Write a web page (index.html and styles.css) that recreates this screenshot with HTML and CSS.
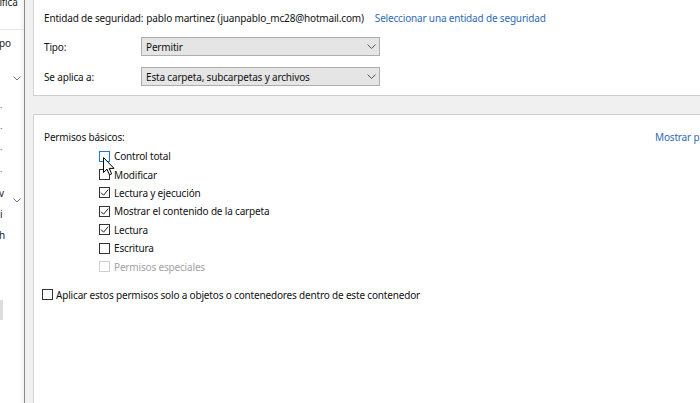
FILE: index.html
```html
<!DOCTYPE html>
<html lang="es">
<head>
<meta charset="utf-8">
<title>Permisos</title>
<link rel="stylesheet" href="styles.css">
</head>
<body>
<div class="screen">
  <aside class="backwin">
    <div class="bw-row bw-r1"><span class="frag">tifica</span></div>
    <div class="bw-sep"></div>
    <div class="bw-row bw-r2"><span class="frag">po</span></div>
    <div class="bw-row bw-r3"><svg class="chev" viewBox="0 0 8 5" width="8" height="5"><path d="M0.5 0.5 L4 4 L7.5 0.5" fill="none" stroke="#777" stroke-width="1"/></svg></div>
    <div class="bw-row bw-r4"><span class="frag sm">·</span></div>
    <div class="bw-row bw-r5"><span class="frag sm">·</span></div>
    <div class="bw-row bw-r6"><span class="frag sm">·</span></div>
    <div class="bw-row bw-r7"><span class="frag sm">·</span></div>
    <div class="bw-row bw-r8"><span class="frag">v</span><svg class="chev" viewBox="0 0 8 5" width="8" height="5"><path d="M0.5 0.5 L4 4 L7.5 0.5" fill="none" stroke="#777" stroke-width="1"/></svg></div>
    <div class="bw-row bw-r9"><span class="frag">i</span></div>
    <div class="bw-row bw-r10"><span class="frag">h</span></div>
    <div class="bw-block"></div>
  </aside>
  <div class="gutter"></div>
  <main class="dialog">
    <section class="panel top">
      <div class="row entity">
        <span class="label">Entidad de seguridad:</span>
        <span class="value">pablo martinez (juanpablo_mc28@hotmail.com)</span>
        <a class="link">Seleccionar una entidad de seguridad</a>
      </div>
      <div class="row field">
        <span class="label">Tipo:</span>
        <div class="combo"><span>Permitir</span><svg viewBox="0 0 9 5" width="9" height="5"><path d="M0.5 0.5 L4.5 4.5 L8.5 0.5" fill="none" stroke="#555" stroke-width="1"/></svg></div>
      </div>
      <div class="row field">
        <span class="label">Se aplica a:</span>
        <div class="combo"><span>Esta carpeta, subcarpetas y archivos</span><svg viewBox="0 0 9 5" width="9" height="5"><path d="M0.5 0.5 L4.5 4.5 L8.5 0.5" fill="none" stroke="#555" stroke-width="1"/></svg></div>
      </div>
    </section>
    <div class="band"></div>
    <section class="panel perms">
      <div class="perm-head">
        <span class="label">Permisos básicos:</span>
        <a class="link more">Mostrar p</a>
      </div>
      <ul class="checks">
        <li class="check hover"><span class="box"></span>Control total</li>
        <li class="check"><span class="box"></span>Modificar</li>
        <li class="check"><span class="box on"><svg viewBox="0 0 9 9" width="9" height="9"><path d="M1 4.6 L3.6 7.2 L8.2 1.6" fill="none" stroke="#222" stroke-width="1"/></svg></span>Lectura y ejecución</li>
        <li class="check"><span class="box on"><svg viewBox="0 0 9 9" width="9" height="9"><path d="M1 4.6 L3.6 7.2 L8.2 1.6" fill="none" stroke="#222" stroke-width="1"/></svg></span>Mostrar el contenido de la carpeta</li>
        <li class="check"><span class="box on"><svg viewBox="0 0 9 9" width="9" height="9"><path d="M1 4.6 L3.6 7.2 L8.2 1.6" fill="none" stroke="#222" stroke-width="1"/></svg></span>Lectura</li>
        <li class="check"><span class="box"></span>Escritura</li>
        <li class="check disabled"><span class="box"></span>Permisos especiales</li>
      </ul>
      <div class="check apply"><span class="box"></span>Aplicar estos permisos solo a objetos o contenedores dentro de este contenedor</div>
      <svg class="cursor" viewBox="0 0 12 19" width="12" height="19"><path d="M0.5 0.5 L0.5 15.5 L4 12.2 L6.4 17.8 L8.6 16.9 L6.3 11.4 L11 11.4 Z" fill="#fff" stroke="#000" stroke-width="1" stroke-linejoin="round"/></svg>
    </section>
  </main>
</div>
</body>
</html>
```
FILE: styles.css
```css
* { box-sizing: border-box; }
html, body { margin: 0; padding: 0; }
body {
  width: 700px;
  height: 403px;
  overflow: hidden;
  background: #fff;
  font-family: "Noto Sans", "Segoe UI", sans-serif;
  font-size: 10px;
  letter-spacing: -0.17px;
  color: #111;
}
.screen {
  display: flex;
  height: 403px;
}

/* background window fragment */
.backwin {
  width: 25px;
  flex: none;
  position: relative;
  background: linear-gradient(to right, #fff 0, #fff 19px, #f2f2f2 24px);
  border-right: 1px solid #8c8c8c;
  overflow: hidden;
  display: flex;
  flex-direction: column;
  font-size: 10px;
}
.bw-row {
  position: relative;
  display: flex;
  align-items: center;
  white-space: nowrap;
}
.frag { display: block; color: #222; }
.frag.sm { color: #666; font-size: 9px; }
.bw-r1 { height: 8px; align-items: flex-start; }
.bw-r1 .frag { margin-left: -4px; line-height: 10px; margin-top: -3px; }
.bw-sep { height: 1px; background: #e3e3e3; margin-top: 21px; }
.bw-r2 { height: 26px; }
.bw-r2 .frag { margin-left: -1px; }
.bw-r3 { height: 40px; }
.bw-r3 .chev { margin-left: 13px; margin-top: 5px; }
.bw-r4 { height: 22px; }
.bw-r5 { height: 20px; }
.bw-r6 { height: 22px; }
.bw-r7 { height: 22px; }
.bw-r8 { height: 22px; }
.bw-r8 .frag { margin-left: -1px; width: 14px; }
.bw-r8 .chev { margin-top: 14px; }
.bw-r9 { height: 20px; }
.bw-r9 .frag { margin-left: 0; }
.bw-r10 { height: 22px; }
.bw-r10 .frag { margin-left: -1px; }
.bw-block { width: 3px; height: 20px; background: #dcdcdc; margin-top: 54px; }

.gutter {
  width: 8px;
  flex: none;
  background: #f0f0f0;
}

.dialog {
  flex: 1;
  display: flex;
  flex-direction: column;
  background: #f0f0f0;
  min-width: 0;
}
.panel {
  background: #fff;
  border-left: 1px solid #d2d2d2;
  padding-left: 10px;
}
.top {
  height: 96px;
  border-bottom: 1px solid #cdcdcd;
  padding-top: 10px;
}
.band { height: 18px; flex: none; }
.perms {
  flex: 1;
  border-top: 1px solid #cdcdcd;
  position: relative;
  padding-top: 14px;
}

.row {
  display: flex;
  align-items: center;
}
.label {
  width: 97px;
  flex: none;
  white-space: nowrap;
}
.entity { height: 16px; }
.entity .label { width: auto; }
.entity .value { margin-left: 3px; }
.link { color: #2e6bb5; text-decoration: none; cursor: pointer; white-space: nowrap; }
.entity .link { margin-left: 11px; }
.field { height: 19px; margin-top: 11px; }
.field + .field { margin-top: 11px; }
.combo {
  width: 239px;
  height: 19px;
  background: #e5e5e5;
  border: 1px solid #adadad;
  display: flex;
  align-items: center;
  justify-content: space-between;
  padding: 0 3px 0 4px;
}
.combo svg { flex: none; }

.perm-head {
  display: flex;
  align-items: center;
  height: 16px;
}
.perm-head .more { margin-left: 514px; }

.checks {
  list-style: none;
  margin: 2px 0 0 0;
  padding: 0 0 0 55px;
}
.check {
  display: flex;
  align-items: center;
  height: 18.4px;
  white-space: nowrap;
}
.box {
  width: 11px;
  height: 11px;
  border: 1px solid #333;
  background: #fff;
  margin-right: 4px;
  flex: none;
  display: flex;
  align-items: center;
  justify-content: center;
}
.box svg { display: block; }
.check.hover .box { border-color: #1e7bd0; }
.check.disabled { color: #a3a3a3; }
.check.disabled .box { border-color: #cfcfcf; }
.apply {
  margin-top: 10px;
  margin-left: -2px;
}
.apply .box { margin-right: 3px; }
.cursor {
  position: absolute;
  left: 69px;
  top: 42px;
}
```
